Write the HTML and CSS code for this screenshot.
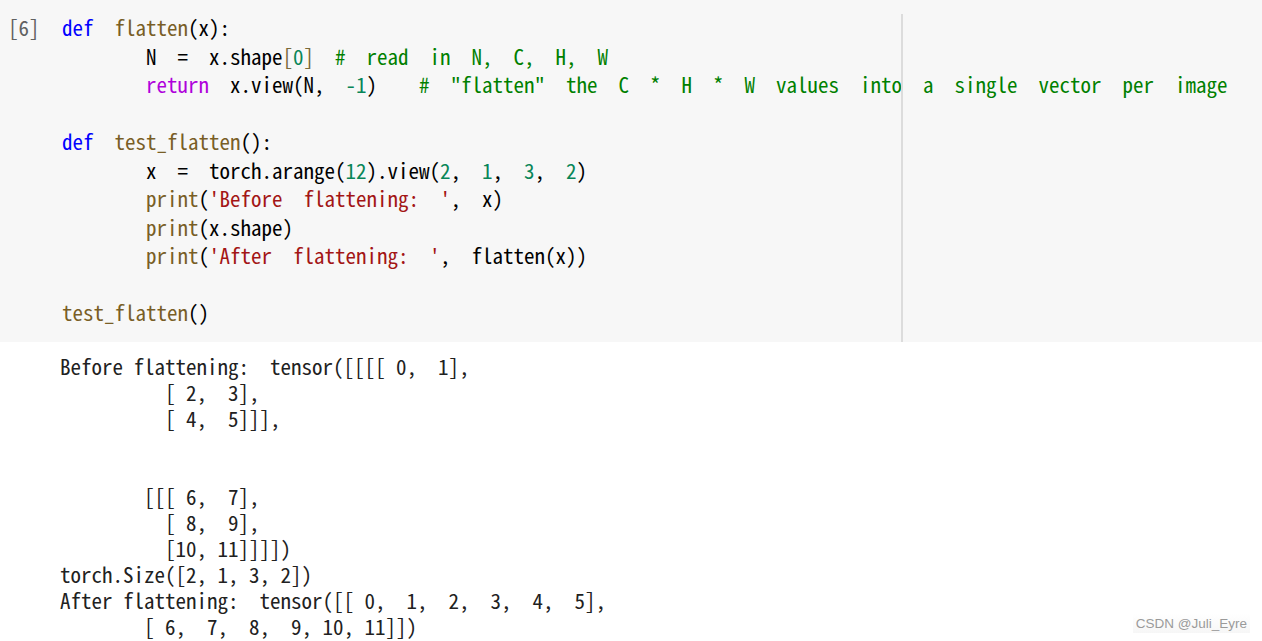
FILE: index.html
```html
<!DOCTYPE html>
<html lang="en">
<head>
<meta charset="utf-8">
<title>Notebook cell</title>
<link rel="stylesheet" href="styles.css">
</head>
<body>
<div class="notebook">
  <div class="cell">
    <div class="gutter">[6]</div>
    <div class="editor">
      <pre class="code"><span class="kw">def</span> <span class="fn">flatten</span>(x):
    N = x.shape<span class="br">[</span><span class="num">0</span><span class="br">]</span> <span class="cm"># read in N, C, H, W</span>
    <span class="ctl">return</span> x.view(N, <span class="num">-1</span>)  <span class="cm"># "flatten" the C * H * W values into a single vector per image</span>

<span class="kw">def</span> <span class="fn">test_flatten</span>():
    x = torch.arange(<span class="num">12</span>).view(<span class="num">2</span>, <span class="num">1</span>, <span class="num">3</span>, <span class="num">2</span>)
    <span class="fn">print</span>(<span class="str">'Before flattening: '</span>, x)
    <span class="fn">print</span>(x.shape)
    <span class="fn">print</span>(<span class="str">'After flattening: '</span>, flatten(x))

<span class="fn">test_flatten</span>()</pre>
      <div class="ruler"></div>
    </div>
  </div>
  <pre class="output">Before flattening:  tensor([[[[ 0,  1],
          [ 2,  3],
          [ 4,  5]]],


        [[[ 6,  7],
          [ 8,  9],
          [10, 11]]]])
torch.Size([2, 1, 3, 2])
After flattening:  tensor([[ 0,  1,  2,  3,  4,  5],
        [ 6,  7,  8,  9, 10, 11]])</pre>
  <div class="watermark">CSDN @Juli_Eyre</div>
</div>
</body>
</html>
```
FILE: styles.css
```css
html, body {
  margin: 0;
  padding: 0;
  background: #ffffff;
}

.notebook {
  position: relative;
  width: 1262px;
  height: 641px;
  overflow: hidden;
  font-family: "Noto Sans Mono CJK SC", "Liberation Mono", monospace;
  font-size: 21px;
}

.cell {
  display: flex;
  background: #f7f7f7;
  padding-top: 14px;
}

.gutter {
  width: 54px;
  padding-left: 8px;
  flex: none;
  color: #616161;
  line-height: 28.5px;
  margin-top: -1px;
  white-space: pre;
}

.editor {
  position: relative;
  flex: 1;
  padding-bottom: 14px;
}

.code {
  margin: -1px 0 1px 0;
  font: inherit;
  line-height: 28.5px;
  color: #000000;
  word-spacing: 10.5px;
  white-space: pre;
}

.ruler {
  position: absolute;
  top: 0;
  bottom: 0;
  left: 839px;
  width: 2px;
  background: #dcdcdc;
}

.kw { color: #0000ff; }
.ctl { color: #af00db; }
.fn { color: #795e26; }
.num { color: #098658; }
.str { color: #a31515; }
.cm { color: #008000; }
.br { color: #7a6a3a; }

.output {
  margin: 0;
  padding: 11.5px 0 0 60px;
  font: inherit;
  line-height: 26px;
  color: #212121;
  white-space: pre;
}

.watermark {
  position: absolute;
  right: 12px;
  bottom: 8px;
  font-family: "Liberation Sans", Arial, sans-serif;
  font-size: 13.5px;
  color: #9a9a9a;
  padding: 2px 3px;
  background: linear-gradient(to bottom, rgba(255,255,255,0.9), rgba(240,240,240,0.6));
}
```
